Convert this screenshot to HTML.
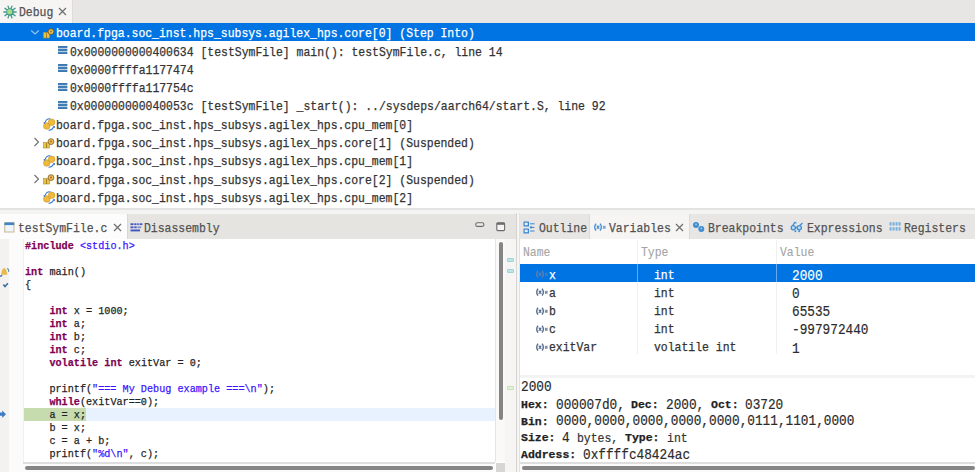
<!DOCTYPE html>
<html><head><meta charset="utf-8">
<style>
*{margin:0;padding:0;box-sizing:border-box}
html,body{width:975px;height:472px;overflow:hidden;background:#fff}
body{position:relative;font-family:"Liberation Mono",monospace}
.a{position:absolute}
.tx{white-space:pre;transform-origin:0 0}
</style></head><body>
<div class="a" style="left:0px;top:0px;width:975px;height:23.3px;background:#e8e6e4;"></div>
<div class="a" style="left:0px;top:0px;width:72.2px;height:23.3px;background:#f6f5f4;"></div>
<div class="a" style="left:72px;top:0px;width:0.8px;height:23.3px;background:#dedbd8;"></div>
<div class="a tx" style="left:18.50px;top:6.70px;font-size:12.4px;line-height:12.4px;transform:scaleX(0.9234);color:#525252;font-weight:normal;-webkit-text-stroke:0.25px currentColor">Debug</div>
<div class="a" style="left:0px;top:23.3px;width:975px;height:18.2px;background:#0074e3;"></div>
<div class="a tx" style="left:56.00px;top:28.30px;font-size:12.4px;line-height:12.4px;transform:scaleX(0.9234);color:#ffffff;font-weight:normal;-webkit-text-stroke:0.25px currentColor">board.fpga.soc_inst.hps_subsys.agilex_hps.core[0] (Step Into)</div>
<div class="a tx" style="left:69.50px;top:46.58px;font-size:12.4px;line-height:12.4px;transform:scaleX(0.9234);color:#333333;font-weight:normal;-webkit-text-stroke:0.25px currentColor">0x0000000000400634 [testSymFile] main(): testSymFile.c, line 14</div>
<div class="a tx" style="left:69.50px;top:64.86px;font-size:12.4px;line-height:12.4px;transform:scaleX(0.9234);color:#333333;font-weight:normal;-webkit-text-stroke:0.25px currentColor">0x0000ffffa1177474</div>
<div class="a tx" style="left:69.50px;top:83.14px;font-size:12.4px;line-height:12.4px;transform:scaleX(0.9234);color:#333333;font-weight:normal;-webkit-text-stroke:0.25px currentColor">0x0000ffffa117754c</div>
<div class="a tx" style="left:69.50px;top:101.42px;font-size:12.4px;line-height:12.4px;transform:scaleX(0.9234);color:#333333;font-weight:normal;-webkit-text-stroke:0.25px currentColor">0x000000000040053c [testSymFile] _start(): ../sysdeps/aarch64/start.S, line 92</div>
<div class="a tx" style="left:56.00px;top:119.70px;font-size:12.4px;line-height:12.4px;transform:scaleX(0.9234);color:#333333;font-weight:normal;-webkit-text-stroke:0.25px currentColor">board.fpga.soc_inst.hps_subsys.agilex_hps.cpu_mem[0]</div>
<div class="a tx" style="left:56.00px;top:137.98px;font-size:12.4px;line-height:12.4px;transform:scaleX(0.9234);color:#333333;font-weight:normal;-webkit-text-stroke:0.25px currentColor">board.fpga.soc_inst.hps_subsys.agilex_hps.core[1] (Suspended)</div>
<div class="a tx" style="left:56.00px;top:156.26px;font-size:12.4px;line-height:12.4px;transform:scaleX(0.9234);color:#333333;font-weight:normal;-webkit-text-stroke:0.25px currentColor">board.fpga.soc_inst.hps_subsys.agilex_hps.cpu_mem[1]</div>
<div class="a tx" style="left:56.00px;top:174.54px;font-size:12.4px;line-height:12.4px;transform:scaleX(0.9234);color:#333333;font-weight:normal;-webkit-text-stroke:0.25px currentColor">board.fpga.soc_inst.hps_subsys.agilex_hps.core[2] (Suspended)</div>
<div class="a tx" style="left:56.00px;top:192.82px;font-size:12.4px;line-height:12.4px;transform:scaleX(0.9234);color:#333333;font-weight:normal;-webkit-text-stroke:0.25px currentColor">board.fpga.soc_inst.hps_subsys.agilex_hps.cpu_mem[2]</div>
<div class="a" style="left:0px;top:208.2px;width:975px;height:2px;background:#e3e3e3;"></div>
<div class="a" style="left:0px;top:210.2px;width:975px;height:3.4px;background:#f4f4f3;"></div>
<div class="a" style="left:0px;top:213.6px;width:515.5px;height:25px;background:#e6e4e1;"></div>
<div class="a" style="left:0px;top:213.6px;width:126.7px;height:25px;background:#fcfcfc;"></div>
<div class="a" style="left:126.7px;top:213.6px;width:0.8px;height:25px;background:#d9d6d3;"></div>
<div class="a tx" style="left:18.30px;top:223.20px;font-size:12.4px;line-height:12.4px;transform:scaleX(0.9234);color:#525252;font-weight:normal;-webkit-text-stroke:0.25px currentColor">testSymFile.c</div>
<div class="a tx" style="left:144.30px;top:223.20px;font-size:12.4px;line-height:12.4px;transform:scaleX(0.9234);color:#525252;font-weight:normal;-webkit-text-stroke:0.25px currentColor">Disassembly</div>
<div class="a" style="left:0px;top:238.6px;width:515.5px;height:234px;background:#ffffff;"></div>
<div class="a" style="left:0px;top:238.6px;width:9.2px;height:234px;background:#f3f2f1;"></div>
<div class="a" style="left:9.2px;top:238.6px;width:13.5px;height:234px;background:#fbfbfb;"></div>
<div class="a" style="left:22.5px;top:238.6px;width:0.6px;height:234px;background:#f0f0f0;"></div>
<div class="a" style="left:23px;top:407.9px;width:473px;height:12.8px;background:#e8f2fe;"></div>
<div class="a" style="left:24.3px;top:407.9px;width:61.3px;height:12.8px;background:#c6dbae;"></div>
<div class="a tx" style="left:24.50px;top:240.41px;font-size:11.6px;line-height:11.6px;transform:scaleX(0.8764);color:#222222;font-weight:normal;-webkit-text-stroke:0.25px currentColor"><span style="color:#7f0055;font-weight:bold">#include</span> <span style="color:#3a14ff">&lt;stdio.h&gt;</span></div>
<div class="a tx" style="left:24.50px;top:266.35px;font-size:11.6px;line-height:11.6px;transform:scaleX(0.8764);color:#222222;font-weight:normal;-webkit-text-stroke:0.25px currentColor"><span style="color:#7f0055;font-weight:bold">int</span> main()</div>
<div class="a tx" style="left:24.50px;top:279.32px;font-size:11.6px;line-height:11.6px;transform:scaleX(0.8764);color:#222222;font-weight:normal;-webkit-text-stroke:0.25px currentColor">{</div>
<div class="a tx" style="left:24.50px;top:305.26px;font-size:11.6px;line-height:11.6px;transform:scaleX(0.8764);color:#222222;font-weight:normal;-webkit-text-stroke:0.25px currentColor">    <span style="color:#7f0055;font-weight:bold">int</span> x = 1000;</div>
<div class="a tx" style="left:24.50px;top:318.23px;font-size:11.6px;line-height:11.6px;transform:scaleX(0.8764);color:#222222;font-weight:normal;-webkit-text-stroke:0.25px currentColor">    <span style="color:#7f0055;font-weight:bold">int</span> a;</div>
<div class="a tx" style="left:24.50px;top:331.20px;font-size:11.6px;line-height:11.6px;transform:scaleX(0.8764);color:#222222;font-weight:normal;-webkit-text-stroke:0.25px currentColor">    <span style="color:#7f0055;font-weight:bold">int</span> b;</div>
<div class="a tx" style="left:24.50px;top:344.17px;font-size:11.6px;line-height:11.6px;transform:scaleX(0.8764);color:#222222;font-weight:normal;-webkit-text-stroke:0.25px currentColor">    <span style="color:#7f0055;font-weight:bold">int</span> c;</div>
<div class="a tx" style="left:24.50px;top:357.14px;font-size:11.6px;line-height:11.6px;transform:scaleX(0.8764);color:#222222;font-weight:normal;-webkit-text-stroke:0.25px currentColor">    <span style="color:#7f0055;font-weight:bold">volatile</span> <span style="color:#7f0055;font-weight:bold">int</span> exitVar = 0;</div>
<div class="a tx" style="left:24.50px;top:383.08px;font-size:11.6px;line-height:11.6px;transform:scaleX(0.8764);color:#222222;font-weight:normal;-webkit-text-stroke:0.25px currentColor">    printf(<span style="color:#3a14ff">"=== My Debug example ===\n"</span>);</div>
<div class="a tx" style="left:24.50px;top:396.05px;font-size:11.6px;line-height:11.6px;transform:scaleX(0.8764);color:#222222;font-weight:normal;-webkit-text-stroke:0.25px currentColor">    <span style="color:#7f0055;font-weight:bold">while</span>(exitVar==0);</div>
<div class="a tx" style="left:24.50px;top:409.02px;font-size:11.6px;line-height:11.6px;transform:scaleX(0.8764);color:#222222;font-weight:normal;-webkit-text-stroke:0.25px currentColor">    a = x;</div>
<div class="a tx" style="left:24.50px;top:421.99px;font-size:11.6px;line-height:11.6px;transform:scaleX(0.8764);color:#222222;font-weight:normal;-webkit-text-stroke:0.25px currentColor">    b = x;</div>
<div class="a tx" style="left:24.50px;top:434.96px;font-size:11.6px;line-height:11.6px;transform:scaleX(0.8764);color:#222222;font-weight:normal;-webkit-text-stroke:0.25px currentColor">    c = a + b;</div>
<div class="a tx" style="left:24.50px;top:447.93px;font-size:11.6px;line-height:11.6px;transform:scaleX(0.8764);color:#222222;font-weight:normal;-webkit-text-stroke:0.25px currentColor">    printf(<span style="color:#3a14ff">"%d\n"</span>, c);</div>
<div class="a" style="left:495px;top:238.6px;width:1px;height:223.5px;background:#e4e4e4;"></div>
<div class="a" style="left:496px;top:238.6px;width:8.5px;height:223.5px;background:#f9f9f9;"></div>
<div class="a" style="left:504.5px;top:238.6px;width:11px;height:234px;background:#f6f5f4;"></div>
<div class="a" style="left:498.6px;top:241.8px;width:4.6px;height:178px;background:#858585;border-radius:2.3px"></div>
<div class="a" style="left:22.7px;top:462px;width:472.3px;height:10px;background:#fbfbfb;"></div>
<div class="a" style="left:22.7px;top:462px;width:472.3px;height:1.8px;background:#dedede;"></div>
<div class="a" style="left:25.2px;top:466.1px;width:468px;height:4.2px;background:#858585;border-radius:2.1px"></div>
<div class="a" style="left:495.8px;top:463px;width:9.6px;height:9px;background:#d6d6d6;"></div>
<div class="a" style="left:515.5px;top:213.3px;width:1px;height:259px;background:#d6d4d2;"></div>
<div class="a" style="left:516.5px;top:213.3px;width:2px;height:259px;background:#f5f5f4;"></div>
<div class="a" style="left:518.5px;top:213.3px;width:1px;height:259px;background:#e2e2e2;"></div>
<div class="a" style="left:519.5px;top:213.6px;width:455.5px;height:25px;background:#e8e6e4;"></div>
<div class="a" style="left:589.3px;top:213.6px;width:100.1px;height:25px;background:#f6f5f4;"></div>
<div class="a" style="left:589px;top:213.6px;width:0.8px;height:25px;background:#dcd9d6;"></div>
<div class="a" style="left:689.2px;top:213.6px;width:0.8px;height:25px;background:#dcd9d6;"></div>
<div class="a tx" style="left:538.50px;top:223.20px;font-size:12.4px;line-height:12.4px;transform:scaleX(0.9234);color:#525252;font-weight:normal;-webkit-text-stroke:0.25px currentColor">Outline</div>
<div class="a tx" style="left:608.70px;top:223.20px;font-size:12.4px;line-height:12.4px;transform:scaleX(0.9234);color:#525252;font-weight:normal;-webkit-text-stroke:0.25px currentColor">Variables</div>
<div class="a tx" style="left:707.60px;top:223.20px;font-size:12.4px;line-height:12.4px;transform:scaleX(0.9234);color:#525252;font-weight:normal;-webkit-text-stroke:0.25px currentColor">Breakpoints</div>
<div class="a tx" style="left:806.50px;top:223.20px;font-size:12.4px;line-height:12.4px;transform:scaleX(0.9234);color:#525252;font-weight:normal;-webkit-text-stroke:0.25px currentColor">Expressions</div>
<div class="a tx" style="left:903.70px;top:223.20px;font-size:12.4px;line-height:12.4px;transform:scaleX(0.9234);color:#525252;font-weight:normal;-webkit-text-stroke:0.25px currentColor">Registers</div>
<div class="a" style="left:519.5px;top:238.6px;width:455.5px;height:234px;background:#ffffff;"></div>
<div class="a tx" style="left:522.60px;top:247.10px;font-size:12.4px;line-height:12.4px;transform:scaleX(0.9234);color:#a4a4a4;font-weight:normal;-webkit-text-stroke:0.1px currentColor">Name</div>
<div class="a tx" style="left:641.40px;top:247.10px;font-size:12.4px;line-height:12.4px;transform:scaleX(0.9234);color:#a4a4a4;font-weight:normal;-webkit-text-stroke:0.1px currentColor">Type</div>
<div class="a tx" style="left:779.80px;top:247.10px;font-size:12.4px;line-height:12.4px;transform:scaleX(0.9234);color:#a4a4a4;font-weight:normal;-webkit-text-stroke:0.1px currentColor">Value</div>
<div class="a" style="left:637.2px;top:240px;width:1px;height:114px;background:#f0f0f0;"></div>
<div class="a" style="left:775.7px;top:240px;width:1px;height:114px;background:#f0f0f0;"></div>
<div class="a" style="left:519.5px;top:264.2px;width:455.5px;height:18.2px;background:#0074e3;"></div>
<div class="a" style="left:637.2px;top:264.2px;width:1px;height:18.2px;background:#6aa8ee;"></div>
<div class="a" style="left:775.7px;top:264.2px;width:1px;height:18.2px;background:#6aa8ee;"></div>
<div class="a tx" style="left:548.50px;top:269.60px;font-size:12.4px;line-height:12.4px;transform:scaleX(0.9234);color:#ffffff;font-weight:normal;-webkit-text-stroke:0.25px currentColor">x</div>
<div class="a tx" style="left:653.70px;top:269.60px;font-size:12.4px;line-height:12.4px;transform:scaleX(0.9234);color:#ffffff;font-weight:normal;-webkit-text-stroke:0.25px currentColor">int</div>
<div class="a tx" style="left:792.20px;top:269.01px;font-size:15.0px;line-height:15.0px;transform:scaleX(0.8500);color:#ffffff;font-weight:normal;-webkit-text-stroke:0.2px currentColor">2000</div>
<div class="a tx" style="left:548.50px;top:287.75px;font-size:12.4px;line-height:12.4px;transform:scaleX(0.9234);color:#333333;font-weight:normal;-webkit-text-stroke:0.25px currentColor">a</div>
<div class="a tx" style="left:653.70px;top:287.75px;font-size:12.4px;line-height:12.4px;transform:scaleX(0.9234);color:#333333;font-weight:normal;-webkit-text-stroke:0.25px currentColor">int</div>
<div class="a tx" style="left:792.20px;top:287.16px;font-size:15.0px;line-height:15.0px;transform:scaleX(0.8500);color:#2b2b2b;font-weight:normal;-webkit-text-stroke:0.2px currentColor">0</div>
<div class="a tx" style="left:548.50px;top:305.90px;font-size:12.4px;line-height:12.4px;transform:scaleX(0.9234);color:#333333;font-weight:normal;-webkit-text-stroke:0.25px currentColor">b</div>
<div class="a tx" style="left:653.70px;top:305.90px;font-size:12.4px;line-height:12.4px;transform:scaleX(0.9234);color:#333333;font-weight:normal;-webkit-text-stroke:0.25px currentColor">int</div>
<div class="a tx" style="left:792.20px;top:305.31px;font-size:15.0px;line-height:15.0px;transform:scaleX(0.8500);color:#2b2b2b;font-weight:normal;-webkit-text-stroke:0.2px currentColor">65535</div>
<div class="a tx" style="left:548.50px;top:324.05px;font-size:12.4px;line-height:12.4px;transform:scaleX(0.9234);color:#333333;font-weight:normal;-webkit-text-stroke:0.25px currentColor">c</div>
<div class="a tx" style="left:653.70px;top:324.05px;font-size:12.4px;line-height:12.4px;transform:scaleX(0.9234);color:#333333;font-weight:normal;-webkit-text-stroke:0.25px currentColor">int</div>
<div class="a tx" style="left:792.20px;top:323.46px;font-size:15.0px;line-height:15.0px;transform:scaleX(0.8500);color:#2b2b2b;font-weight:normal;-webkit-text-stroke:0.2px currentColor">-997972440</div>
<div class="a tx" style="left:548.50px;top:342.20px;font-size:12.4px;line-height:12.4px;transform:scaleX(0.9234);color:#333333;font-weight:normal;-webkit-text-stroke:0.25px currentColor">exitVar</div>
<div class="a tx" style="left:653.70px;top:342.20px;font-size:12.4px;line-height:12.4px;transform:scaleX(0.9234);color:#333333;font-weight:normal;-webkit-text-stroke:0.25px currentColor">volatile int</div>
<div class="a tx" style="left:792.20px;top:341.61px;font-size:15.0px;line-height:15.0px;transform:scaleX(0.8500);color:#2b2b2b;font-weight:normal;-webkit-text-stroke:0.2px currentColor">1</div>
<div class="a" style="left:520px;top:374.7px;width:455px;height:3px;background:#f3f3f3;"></div>
<div class="a tx" style="left:521.10px;top:380.31px;font-size:15.0px;line-height:15.0px;transform:scaleX(0.8500);color:#2b2b2b;font-weight:normal;-webkit-text-stroke:0.2px currentColor">2000</div>
<div class="a tx" style="left:521.00px;top:400.16px;font-size:11.8px;line-height:11.8px;transform:scaleX(0.9746);color:#222222;font-weight:bold;-webkit-text-stroke:0.25px currentColor">Hex: </div>
<div class="a tx" style="left:555.50px;top:397.71px;font-size:15.0px;line-height:15.0px;transform:scaleX(0.8500);color:#2b2b2b;font-weight:normal;-webkit-text-stroke:0.2px currentColor">000007d0,</div>
<div class="a tx" style="left:624.35px;top:399.70px;font-size:12.4px;line-height:12.4px;transform:scaleX(0.9274);color:#333333;font-weight:normal;-webkit-text-stroke:0.2px currentColor"> </div>
<div class="a tx" style="left:631.25px;top:400.16px;font-size:11.8px;line-height:11.8px;transform:scaleX(0.9746);color:#222222;font-weight:bold;-webkit-text-stroke:0.25px currentColor">Dec: </div>
<div class="a tx" style="left:665.75px;top:397.71px;font-size:15.0px;line-height:15.0px;transform:scaleX(0.8500);color:#2b2b2b;font-weight:normal;-webkit-text-stroke:0.2px currentColor">2000,</div>
<div class="a tx" style="left:704.00px;top:399.70px;font-size:12.4px;line-height:12.4px;transform:scaleX(0.9274);color:#333333;font-weight:normal;-webkit-text-stroke:0.2px currentColor"> </div>
<div class="a tx" style="left:710.90px;top:400.16px;font-size:11.8px;line-height:11.8px;transform:scaleX(0.9746);color:#222222;font-weight:bold;-webkit-text-stroke:0.25px currentColor">Oct: </div>
<div class="a tx" style="left:745.40px;top:397.71px;font-size:15.0px;line-height:15.0px;transform:scaleX(0.8500);color:#2b2b2b;font-weight:normal;-webkit-text-stroke:0.2px currentColor">03720</div>
<div class="a tx" style="left:521.00px;top:416.86px;font-size:11.8px;line-height:11.8px;transform:scaleX(0.9746);color:#222222;font-weight:bold;-webkit-text-stroke:0.25px currentColor">Bin: </div>
<div class="a tx" style="left:555.50px;top:414.41px;font-size:15.0px;line-height:15.0px;transform:scaleX(0.8500);color:#2b2b2b;font-weight:normal;-webkit-text-stroke:0.2px currentColor">0000,0000,0000,0000,0000,0111,1101,0000</div>
<div class="a tx" style="left:521.00px;top:433.46px;font-size:11.8px;line-height:11.8px;transform:scaleX(0.9746);color:#222222;font-weight:bold;-webkit-text-stroke:0.25px currentColor">Size: </div>
<div class="a tx" style="left:562.40px;top:431.01px;font-size:15.0px;line-height:15.0px;transform:scaleX(0.8500);color:#2b2b2b;font-weight:normal;-webkit-text-stroke:0.2px currentColor">4</div>
<div class="a tx" style="left:570.05px;top:433.00px;font-size:12.4px;line-height:12.4px;transform:scaleX(0.9274);color:#333333;font-weight:normal;-webkit-text-stroke:0.2px currentColor"> bytes, </div>
<div class="a tx" style="left:625.25px;top:433.46px;font-size:11.8px;line-height:11.8px;transform:scaleX(0.9746);color:#222222;font-weight:bold;-webkit-text-stroke:0.25px currentColor">Type: </div>
<div class="a tx" style="left:666.65px;top:433.00px;font-size:12.4px;line-height:12.4px;transform:scaleX(0.9274);color:#333333;font-weight:normal;-webkit-text-stroke:0.2px currentColor">int</div>
<div class="a tx" style="left:521.00px;top:450.26px;font-size:11.8px;line-height:11.8px;transform:scaleX(0.9746);color:#222222;font-weight:bold;-webkit-text-stroke:0.25px currentColor">Address: </div>
<div class="a tx" style="left:583.10px;top:447.81px;font-size:15.0px;line-height:15.0px;transform:scaleX(0.8500);color:#2b2b2b;font-weight:normal;-webkit-text-stroke:0.2px currentColor">0xffffc48424ac</div>
<div class="a" style="left:519.5px;top:462px;width:455.5px;height:10px;background:#fbfbfb;"></div>
<div class="a" style="left:519.5px;top:462px;width:455.5px;height:1.8px;background:#dedede;"></div>
<div class="a" style="left:522.3px;top:466.1px;width:453px;height:4.2px;background:#858585;border-radius:2.1px"></div>
<svg class="a" style="left:57.6px;top:6.8px" width="9" height="9" viewBox="0 0 9 9"><path d="M1 1L8 8M8 1L1 8" stroke="#707070" stroke-width="1.25" fill="none"/></svg>
<svg class="a" style="left:112.6px;top:223.2px" width="9" height="9" viewBox="0 0 9 9"><path d="M1 1L8 8M8 1L1 8" stroke="#707070" stroke-width="1.25" fill="none"/></svg>
<svg class="a" style="left:674.6px;top:223.2px" width="9" height="9" viewBox="0 0 9 9"><path d="M1 1L8 8M8 1L1 8" stroke="#707070" stroke-width="1.25" fill="none"/></svg>
<svg class="a" style="left:0px;top:2px" width="20" height="20" viewBox="0 0 20 20"><line x1="12.50" y1="10.00" x2="16.20" y2="10.00" stroke="#4b9c93" stroke-width="1.4" stroke-linecap="round"/><line x1="12.02" y1="11.47" x2="15.02" y2="13.64" stroke="#4b9c93" stroke-width="1.4" stroke-linecap="round"/><line x1="10.77" y1="12.38" x2="11.92" y2="15.90" stroke="#4b9c93" stroke-width="1.4" stroke-linecap="round"/><line x1="9.23" y1="12.38" x2="8.08" y2="15.90" stroke="#4b9c93" stroke-width="1.4" stroke-linecap="round"/><line x1="7.98" y1="11.47" x2="4.98" y2="13.64" stroke="#4b9c93" stroke-width="1.4" stroke-linecap="round"/><line x1="7.50" y1="10.00" x2="3.80" y2="10.00" stroke="#4b9c93" stroke-width="1.4" stroke-linecap="round"/><line x1="7.98" y1="8.53" x2="4.98" y2="6.36" stroke="#4b9c93" stroke-width="1.4" stroke-linecap="round"/><line x1="9.23" y1="7.62" x2="8.08" y2="4.10" stroke="#4b9c93" stroke-width="1.4" stroke-linecap="round"/><line x1="10.77" y1="7.62" x2="11.92" y2="4.10" stroke="#4b9c93" stroke-width="1.4" stroke-linecap="round"/><line x1="12.02" y1="8.53" x2="15.02" y2="6.36" stroke="#4b9c93" stroke-width="1.4" stroke-linecap="round"/><circle cx="10" cy="10" r="3.7" fill="#3d9a88"/><circle cx="9.7" cy="9.7" r="2.6" fill="#a6d98a"/></svg>
<svg class="a" style="left:30px;top:29px" width="10" height="7" viewBox="0 0 10 7"><path d="M1.2 1.5L5 5L8.8 1.5" stroke="#9cc4f2" stroke-width="1.1" fill="none"/></svg>
<svg class="a" style="left:43.3px;top:28.2px" width="12" height="12" viewBox="0 0 12 12"><rect x="0.5" y="4.5" width="6" height="5.5" fill="#e9c44c" stroke="#b38b22" stroke-width="0.6"/><line x1="3.5" y1="5" x2="3.5" y2="10" stroke="#a07a18" stroke-width="0.9"/><circle cx="8" cy="3.6" r="2.9" fill="#f0c050" stroke="#6a4a1a" stroke-width="0.8"/><circle cx="8" cy="3.6" r="1" fill="#9a6a3a"/></svg>
<svg class="a" style="left:43.3px;top:137.7px" width="12" height="12" viewBox="0 0 12 12"><rect x="0.5" y="4.5" width="6" height="5.5" fill="#e9c44c" stroke="#b38b22" stroke-width="0.6"/><line x1="3.5" y1="5" x2="3.5" y2="10" stroke="#a07a18" stroke-width="0.9"/><circle cx="8" cy="3.6" r="2.9" fill="#f0c050" stroke="#7a5a2a" stroke-width="0.8"/><circle cx="8" cy="3.6" r="1" fill="#9a6a3a"/></svg>
<svg class="a" style="left:43.3px;top:174.3px" width="12" height="12" viewBox="0 0 12 12"><rect x="0.5" y="4.5" width="6" height="5.5" fill="#e9c44c" stroke="#b38b22" stroke-width="0.6"/><line x1="3.5" y1="5" x2="3.5" y2="10" stroke="#a07a18" stroke-width="0.9"/><circle cx="8" cy="3.6" r="2.9" fill="#f0c050" stroke="#7a5a2a" stroke-width="0.8"/><circle cx="8" cy="3.6" r="1" fill="#9a6a3a"/></svg>
<svg class="a" style="left:32.5px;top:137.3px" width="8" height="10" viewBox="0 0 8 10"><path d="M1.5 1L5.5 5L1.5 9" stroke="#6e6e6e" stroke-width="1.1" fill="none"/></svg>
<svg class="a" style="left:32.5px;top:173.9px" width="8" height="10" viewBox="0 0 8 10"><path d="M1.5 1L5.5 5L1.5 9" stroke="#6e6e6e" stroke-width="1.1" fill="none"/></svg>
<svg class="a" style="left:57.9px;top:46.18px" width="10" height="9" viewBox="0 0 10 9"><rect x="0" y="0" width="9.3" height="8" fill="#b9cfe4"/><rect x="0" y="0" width="9.3" height="1.9" fill="#3b78b0"/><rect x="0" y="3.05" width="9.3" height="1.9" fill="#3b78b0"/><rect x="0" y="6.1" width="9.3" height="1.9" fill="#3b78b0"/></svg>
<svg class="a" style="left:57.9px;top:64.46px" width="10" height="9" viewBox="0 0 10 9"><rect x="0" y="0" width="9.3" height="8" fill="#b9cfe4"/><rect x="0" y="0" width="9.3" height="1.9" fill="#3b78b0"/><rect x="0" y="3.05" width="9.3" height="1.9" fill="#3b78b0"/><rect x="0" y="6.1" width="9.3" height="1.9" fill="#3b78b0"/></svg>
<svg class="a" style="left:57.9px;top:82.74px" width="10" height="9" viewBox="0 0 10 9"><rect x="0" y="0" width="9.3" height="8" fill="#b9cfe4"/><rect x="0" y="0" width="9.3" height="1.9" fill="#3b78b0"/><rect x="0" y="3.05" width="9.3" height="1.9" fill="#3b78b0"/><rect x="0" y="6.1" width="9.3" height="1.9" fill="#3b78b0"/></svg>
<svg class="a" style="left:57.9px;top:101.02px" width="10" height="9" viewBox="0 0 10 9"><rect x="0" y="0" width="9.3" height="8" fill="#b9cfe4"/><rect x="0" y="0" width="9.3" height="1.9" fill="#3b78b0"/><rect x="0" y="3.05" width="9.3" height="1.9" fill="#3b78b0"/><rect x="0" y="6.1" width="9.3" height="1.9" fill="#3b78b0"/></svg>
<svg class="a" style="left:42.5px;top:118.3px" width="13" height="13" viewBox="0 0 13 13"><path d="M2.2 4.5A5 5 0 0 1 7.5 0.8" stroke="#3a7ad0" stroke-width="1.1" fill="none"/><path d="M10.6 8.5A5 5 0 0 1 5.5 12.2" stroke="#3a7ad0" stroke-width="1.1" fill="none"/><circle cx="3.8" cy="8" r="3.3" fill="#eebb3c" stroke="#c08a20" stroke-width="0.5"/><circle cx="8.6" cy="4.3" r="3.3" fill="#eebb3c" stroke="#c08a20" stroke-width="0.5"/><circle cx="1.4" cy="4.8" r="0.9" fill="#3a7ad0"/><circle cx="11.2" cy="9" r="0.9" fill="#3a7ad0"/></svg>
<svg class="a" style="left:42.5px;top:154.86px" width="13" height="13" viewBox="0 0 13 13"><path d="M2.2 4.5A5 5 0 0 1 7.5 0.8" stroke="#3a7ad0" stroke-width="1.1" fill="none"/><path d="M10.6 8.5A5 5 0 0 1 5.5 12.2" stroke="#3a7ad0" stroke-width="1.1" fill="none"/><circle cx="3.8" cy="8" r="3.3" fill="#eebb3c" stroke="#c08a20" stroke-width="0.5"/><circle cx="8.6" cy="4.3" r="3.3" fill="#eebb3c" stroke="#c08a20" stroke-width="0.5"/><circle cx="1.4" cy="4.8" r="0.9" fill="#3a7ad0"/><circle cx="11.2" cy="9" r="0.9" fill="#3a7ad0"/></svg>
<svg class="a" style="left:42.5px;top:191.42000000000002px" width="13" height="13" viewBox="0 0 13 13"><path d="M2.2 4.5A5 5 0 0 1 7.5 0.8" stroke="#3a7ad0" stroke-width="1.1" fill="none"/><path d="M10.6 8.5A5 5 0 0 1 5.5 12.2" stroke="#3a7ad0" stroke-width="1.1" fill="none"/><circle cx="3.8" cy="8" r="3.3" fill="#eebb3c" stroke="#c08a20" stroke-width="0.5"/><circle cx="8.6" cy="4.3" r="3.3" fill="#eebb3c" stroke="#c08a20" stroke-width="0.5"/><circle cx="1.4" cy="4.8" r="0.9" fill="#3a7ad0"/><circle cx="11.2" cy="9" r="0.9" fill="#3a7ad0"/></svg>
<svg class="a" style="left:4px;top:222px" width="11" height="11" viewBox="0 0 11 11"><rect x="0.7" y="0.7" width="9.3" height="9.3" fill="#eef6fc" stroke="#c8b890" stroke-width="1"/><rect x="0.5" y="0.5" width="9.7" height="2.6" fill="#3d86c8"/></svg>
<svg class="a" style="left:129.5px;top:223px" width="13" height="9" viewBox="0 0 13 9"><g fill="#3f55c2"><rect x="0.5" y="0.3" width="3" height="1.8"/><rect x="4.3" y="0.3" width="2.2" height="1.8"/><rect x="7.2" y="0.3" width="1.6" height="1.8"/><rect x="9.6" y="0.3" width="2.8" height="1.8"/><rect x="0.5" y="3.4" width="3" height="1.8"/><rect x="4.3" y="3.4" width="2.4" height="1.8"/><rect x="7.4" y="3.4" width="3.8" height="1.8" opacity=".6"/><rect x="0.5" y="6.5" width="9.5" height="1.9"/></g></svg>
<svg class="a" style="left:475px;top:221.5px" width="10" height="6" viewBox="0 0 10 6"><rect x="0.8" y="0.8" width="8" height="3.6" rx="1.5" fill="#ececec" stroke="#6c6c6c" stroke-width="1.1"/></svg>
<svg class="a" style="left:495.5px;top:222px" width="10" height="10" viewBox="0 0 10 10"><rect x="0.8" y="0.8" width="7.8" height="7.8" rx="1" fill="#f4f4f4" stroke="#6c6c6c" stroke-width="1.1"/><rect x="0.8" y="0.8" width="7.8" height="2" fill="#6c6c6c"/></svg>
<svg class="a" style="left:523px;top:221px" width="12" height="13" viewBox="0 0 12 13"><g fill="#3a86d0"><rect x="0.5" y="0.5" width="5.5" height="5" rx="0.6"/><rect x="0.5" y="7.5" width="5.5" height="5" rx="0.6"/></g><g fill="#eaf3fb"><rect x="1.7" y="1.7" width="3" height="2.5"/><rect x="1.7" y="8.7" width="3" height="2.5"/></g><g stroke="#3a86d0" stroke-width="1"><line x1="7" y1="2.8" x2="11.5" y2="2.8"/><line x1="8" y1="6.4" x2="11.5" y2="6.4"/><line x1="7" y1="10" x2="11.5" y2="10"/></g><circle cx="8" cy="6.4" r="1.1" fill="#3a86d0"/></svg>
<svg class="a" style="left:593px;top:223px" width="14" height="10" viewBox="0 0 14 10"><g stroke="#4a90d4" fill="none"><path d="M3 0.7Q0.5 4.2 3 7.7" stroke-width="1.4"/><path d="M7.1 0.7Q9.6 4.2 7.1 7.7" stroke-width="1.4"/><path d="M3.8 2.6L6.3 5.9M6.3 2.6L3.8 5.9" stroke-width="1.1"/></g><rect x="9.9" y="2.8" width="2.7" height="3" fill="#4a90d4" opacity=".75"/></svg>
<svg class="a" style="left:535.3px;top:270.2px" width="14" height="10" viewBox="0 0 14 10"><g stroke="#5f7fae" fill="none"><path d="M3 0.7Q0.5 4.2 3 7.7" stroke-width="1.4"/><path d="M7.1 0.7Q9.6 4.2 7.1 7.7" stroke-width="1.4"/><path d="M3.8 2.6L6.3 5.9M6.3 2.6L3.8 5.9" stroke-width="1.1"/></g><rect x="9.9" y="2.8" width="2.7" height="3" fill="#5f7fae" opacity=".75"/></svg>
<svg class="a" style="left:535.3px;top:288.34999999999997px" width="14" height="10" viewBox="0 0 14 10"><g stroke="#566c90" fill="none"><path d="M3 0.7Q0.5 4.2 3 7.7" stroke-width="1.4"/><path d="M7.1 0.7Q9.6 4.2 7.1 7.7" stroke-width="1.4"/><path d="M3.8 2.6L6.3 5.9M6.3 2.6L3.8 5.9" stroke-width="1.1"/></g><rect x="9.9" y="2.8" width="2.7" height="3" fill="#566c90" opacity=".75"/></svg>
<svg class="a" style="left:535.3px;top:306.5px" width="14" height="10" viewBox="0 0 14 10"><g stroke="#566c90" fill="none"><path d="M3 0.7Q0.5 4.2 3 7.7" stroke-width="1.4"/><path d="M7.1 0.7Q9.6 4.2 7.1 7.7" stroke-width="1.4"/><path d="M3.8 2.6L6.3 5.9M6.3 2.6L3.8 5.9" stroke-width="1.1"/></g><rect x="9.9" y="2.8" width="2.7" height="3" fill="#566c90" opacity=".75"/></svg>
<svg class="a" style="left:535.3px;top:324.65px" width="14" height="10" viewBox="0 0 14 10"><g stroke="#566c90" fill="none"><path d="M3 0.7Q0.5 4.2 3 7.7" stroke-width="1.4"/><path d="M7.1 0.7Q9.6 4.2 7.1 7.7" stroke-width="1.4"/><path d="M3.8 2.6L6.3 5.9M6.3 2.6L3.8 5.9" stroke-width="1.1"/></g><rect x="9.9" y="2.8" width="2.7" height="3" fill="#566c90" opacity=".75"/></svg>
<svg class="a" style="left:535.3px;top:342.79999999999995px" width="14" height="10" viewBox="0 0 14 10"><g stroke="#566c90" fill="none"><path d="M3 0.7Q0.5 4.2 3 7.7" stroke-width="1.4"/><path d="M7.1 0.7Q9.6 4.2 7.1 7.7" stroke-width="1.4"/><path d="M3.8 2.6L6.3 5.9M6.3 2.6L3.8 5.9" stroke-width="1.1"/></g><rect x="9.9" y="2.8" width="2.7" height="3" fill="#566c90" opacity=".75"/></svg>
<svg class="a" style="left:692px;top:221px" width="13" height="12" viewBox="0 0 13 12"><circle cx="4" cy="3.9" r="3" fill="#3f8fd2"/><circle cx="9.3" cy="7.9" r="3" fill="#3f8fd2"/><circle cx="4" cy="3.4" r="0.9" fill="#9cc8ee"/><circle cx="9.3" cy="7.4" r="0.9" fill="#9cc8ee"/></svg>
<svg class="a" style="left:789.5px;top:221px" width="14" height="12" viewBox="0 0 14 12"><g stroke="#3f8fd2" stroke-width="1.3" fill="none"><path d="M1.5 6.5L4.8 1.3L6.5 2.2"/><path d="M8.2 6L12.5 2"/><circle cx="3.3" cy="6.8" r="2.1" fill="#bfdcf4"/><circle cx="9.3" cy="6.8" r="2.1" fill="#bfdcf4"/><line x1="5.4" y1="6.4" x2="7.2" y2="6.4"/></g><rect x="4.5" y="9.3" width="1.8" height="1.8" fill="#3f8fd2"/><rect x="8.3" y="9.3" width="1.8" height="1.8" fill="#3f8fd2"/></svg>
<svg class="a" style="left:888.5px;top:222px" width="13" height="10" viewBox="0 0 13 10"><rect x="0.5" y="0" width="2.2" height="3.8" rx="1" fill="#7ab4e0"/><rect x="0.5" y="5" width="2.2" height="3.8" rx="1" fill="#7ab4e0"/><rect x="3.5" y="0" width="2.2" height="3.8" rx="1" fill="#7ab4e0"/><rect x="3.5" y="5" width="2.2" height="3.8" rx="1" fill="#7ab4e0"/><rect x="6.5" y="0" width="2.2" height="3.8" rx="1" fill="#7ab4e0"/><rect x="6.5" y="5" width="2.2" height="3.8" rx="1" fill="#7ab4e0"/><rect x="9.5" y="0" width="2.2" height="3.8" rx="1" fill="#7ab4e0"/><rect x="9.5" y="5" width="2.2" height="3.8" rx="1" fill="#7ab4e0"/></svg>
<svg class="a" style="left:0px;top:267px" width="10" height="11" viewBox="0 0 10 11"><path d="M4.2 1.2C5.8 1.2 6.6 3 6.8 5.2L7.4 7.7H1.1L1.6 5.2C1.8 3 2.6 1.2 4.2 1.2Z" fill="#e8b84a"/><path d="M7.4 1.2A3.5 3.5 0 0 1 8.6 5" stroke="#5a8ac0" stroke-width="1.1" fill="none"/><path d="M0 9.5L2.2 8.3" stroke="#3a6aa8" stroke-width="1.4"/></svg>
<svg class="a" style="left:1.5px;top:281.5px" width="8" height="7" viewBox="0 0 8 7"><path d="M1.3 2.6L3 4.5L5.9 1.2" stroke="#3a6aa8" stroke-width="1.5" fill="none"/></svg>
<svg class="a" style="left:0px;top:409.5px" width="7" height="9" viewBox="0 0 7 9"><path d="M0 2.6H2.2V0.5L6 4.2L2.2 8V5.8H0Z" fill="#3d7cc0"/></svg>
<div class="a" style="left:507px;top:258px;width:6.5px;height:4px;background:#bfe6e6;border:1px solid #9fd3d3;border-radius:1px"></div>
<div class="a" style="left:507px;top:268.5px;width:6.5px;height:4px;background:#bfe6e6;border:1px solid #9fd3d3;border-radius:1px"></div>
<div class="a" style="left:507px;top:385.8px;width:6.5px;height:4px;background:#e4f2dc;border:1px solid #c6e0b6;border-radius:1px"></div>
</body></html>
